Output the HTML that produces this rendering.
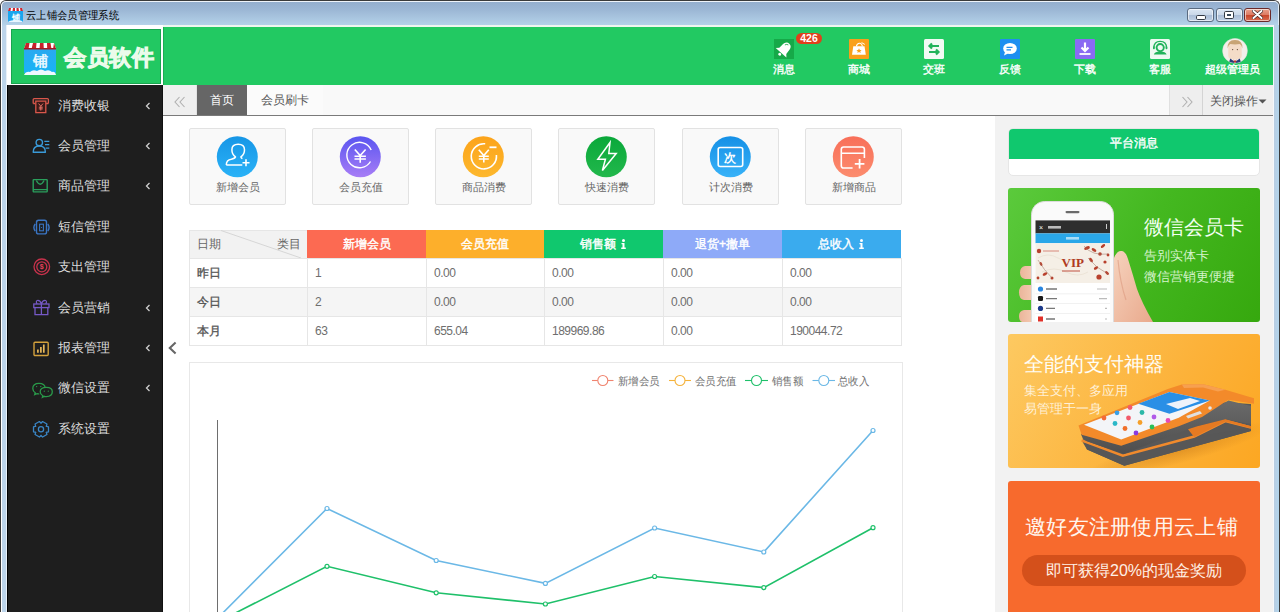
<!DOCTYPE html>
<html><head><meta charset="utf-8">
<style>
*{margin:0;padding:0;box-sizing:border-box}
html,body{width:1280px;height:612px;overflow:hidden;background:#fff;font-family:"Liberation Sans",sans-serif;}
.abs{position:absolute}
#frame{position:absolute;left:0;top:0;width:1280px;height:612px;background:linear-gradient(#93adcc 0px,#9cb7d5 9px,#b4d2e9 24px,#bcd4ea 25px,#bcd4ea 100%);border-left:1px solid #3a3a3a;border-right:1px solid #3a3a3a;border-top:1px solid #3a3a3a;border-radius:6px 6px 0 0}
#title{left:26px;top:8px;font-size:11px;color:#000;line-height:14px;white-space:nowrap;transform:scaleX(0.94);transform-origin:0 0}
.wbtn{position:absolute;top:8px;height:14px;border:1px solid #5a6b80;border-radius:3px;background:linear-gradient(#dbe6f3 0,#c9d7e8 50%,#aabdd6 51%,#bfd0e5 100%);box-shadow:inset 0 0 0 1px rgba(255,255,255,.6)}
#logo{left:7px;top:25px;width:156px;height:60px;background:#fff;}
#logoin{left:11px;top:29px;width:150px;height:55px;background:#22c862;box-shadow:inset 0 0 0 1px rgba(0,60,20,.25)}
#hdr{left:163px;top:25px;width:1110px;height:60px;background:#22c962;border-top:2px solid #eef6f0;box-shadow:inset 1px 0 0 rgba(0,60,20,.2)}
#side{left:7px;top:85px;width:156px;height:527px;background:#1e1e1e;border-left:1px solid #000;border-right:1px solid #111}
#tabs{left:163px;top:85px;width:1110px;height:31px;background:#f9f9f9;border-bottom:1px solid #7a7a7a}
#main{left:163px;top:116px;width:832px;height:496px;background:#fff}
#rpanel{left:995px;top:116px;width:278px;height:496px;background:#f2f2f2}
.mi{left:58px;font-size:13px;line-height:16px;color:#dcdcdc;white-space:nowrap}
.hl{top:62px;width:80px;text-align:center;font-size:11px;line-height:14px;color:#fff;font-weight:normal;-webkit-text-stroke:0.35px #fff;white-space:nowrap}
.card{top:128px;width:97px;height:77px;background:#f9f9f9;border:1px solid #e2e2e2;border-radius:2px}
.clab{top:180px;width:97px;text-align:center;font-size:11px;line-height:14px;color:#666;white-space:nowrap}
.th0{top:237px;font-size:12px;line-height:14px;color:#666}
.th{top:230px;height:28px;line-height:28px;text-align:center;color:#fff;font-size:12px;font-weight:normal;-webkit-text-stroke:0.4px #fff;white-space:nowrap}
.td0{left:197px;height:29px;line-height:29px;padding-top:1px;font-size:12px;font-weight:normal;-webkit-text-stroke:0.35px #555;color:#555}
.td{height:29px;line-height:29px;padding-top:1px;font-size:12px;color:#6e6e6e;letter-spacing:-0.5px}
.leg{top:374.5px;font-size:11px;line-height:13px;color:#707070;transform:scaleX(.95);transform-origin:0 0;white-space:nowrap}
</style></head><body>
<div id="frame"></div>
<div class="abs" style="left:1px;top:1px;width:1278px;height:611px;border-left:1px solid #fff;border-top:1px solid #eef3f9;border-right:1px solid #dfeaf5;border-radius:5px 5px 0 0"></div>
<div class="abs" style="left:1273px;top:25px;width:6px;height:587px;background:linear-gradient(90deg,#f4f8fc 0,#f4f8fc 1px,#b9cde2 1px,#b2d6ee 100%)"></div>
<div class="abs" style="left:6px;top:25px;width:1px;height:587px;background:#e8f0f8"></div>
<svg class="abs" style="left:8px;top:8px" width="15" height="14" viewBox="0 0 15 14"><rect x="0" y="3" width="15" height="11" fill="#1aa6ee"/><path d="M0 3l1-3h13l1 3z" fill="#fff"/><path d="M1 0h2l-.5 3H0zM5 0h2v3H4.5zM8.5 0h2l.5 3H8.5zM12 0h2l1 3h-2.5z" fill="#d0262e"/><text x="7.5" y="11.5" font-size="8" font-weight="bold" fill="#fff" text-anchor="middle" font-family="Liberation Sans">铺</text><path d="M0 14q2-2 4-1.5q3-1.5 6 0q3-1 5 1.5z" fill="#e8f6ff"/></svg>
<div class="abs" id="title">云上铺会员管理系统</div>
<div class="wbtn" style="left:1187px;width:27px"></div>
<div class="wbtn" style="left:1216px;width:27px"></div>
<div class="wbtn" style="left:1244px;width:27px;background:linear-gradient(#eaa08c 0,#dc7b63 50%,#c8452a 51%,#d86d52 100%);border-color:#6b2a2a"></div>
<svg class="abs" style="left:1196px;top:15px" width="10" height="5" viewBox="0 0 10 5"><rect x=".5" y=".5" width="9" height="4" rx="1.2" fill="#fff" stroke="#333a44" stroke-width="1"/></svg>
<svg class="abs" style="left:1224px;top:11px" width="10" height="8" viewBox="0 0 10 8"><rect x=".5" y=".5" width="9" height="7" rx="1.2" fill="#fff" stroke="#333a44" stroke-width="1"/><rect x="3" y="3" width="4" height="2" fill="#3a4a5a"/></svg>
<svg class="abs" style="left:1252px;top:10px" width="11" height="9" viewBox="0 0 11 9"><path d="M1.5 1l8 7M9.5 1l-8 7" stroke="#3a2020" stroke-width="3.2" stroke-linecap="round"/><path d="M1.5 1l8 7M9.5 1l-8 7" stroke="#fff" stroke-width="2" stroke-linecap="round"/></svg>
<div class="abs" id="logo"></div>
<div class="abs" id="logoin"></div>
<div class="abs" id="hdr"></div>

<svg class="abs" style="left:23px;top:42px" width="34" height="33" viewBox="0 0 34 33">
<defs><linearGradient id="lg1" x1="0" y1="0" x2="0" y2="1"><stop offset="0" stop-color="#2aa9f0"/><stop offset="1" stop-color="#17b4f5"/></linearGradient></defs>
<rect x="1" y="7" width="32" height="24" fill="url(#lg1)"/>
<path d="M1 7L3 1h28l2 6z" fill="#fff"/>
<path d="M3 1h3.5l-1 6H1zM10 1h3.5l-.5 6H8.5zM17 1h3.5l.3 6h-4.3zM24 1h3.5l1 6h-4.3zM31 1h0l2 6h-3z" fill="#c8212b"/>
<path d="M1 6h32v1.5H1z" fill="#a51a22"/>
<text x="17" y="24" font-size="15" font-weight="bold" fill="#e8f7ff" text-anchor="middle" font-family="Liberation Sans">铺</text>
<path d="M1 33q2-4 6-3q3-3 7-1q4-3 8 0q4-2 7 1q3-1 4 3z" fill="#eef8ff"/>
</svg>
<div class="abs" style="left:64px;top:45px;font-size:22px;line-height:26px;font-weight:bold;color:#eafbea;letter-spacing:0.5px;-webkit-text-stroke:1px #eafbea;white-space:nowrap">会员软件</div>
<svg class="abs" style="left:773.5px;top:39px" width="20" height="20" viewBox="0 0 20 20"><rect width="20" height="20" fill="#16a948"/><g transform="rotate(42 10 10.5)"><path d="M10 2.6C6.6 2.6 5.6 5.6 5.6 9.2L5.3 12.3 2.8 14.9H17.2L14.7 12.3 14.4 9.2C14.4 5.6 13.4 2.6 10 2.6Z" fill="#fff"/><circle cx="10" cy="16.9" r="1.5" fill="#fff"/><path d="M7.6 6.5q.8-2.2 2.6-2.3" stroke="#16a948" stroke-width=".8" fill="none"/></g></svg>
<div class="abs hl" style="left:743.5px">消息</div>
<svg class="abs" style="left:849px;top:39px" width="20" height="20" viewBox="0 0 20 20"><rect width="20" height="20" rx="1" fill="#f9a01a"/><path d="M4.3 7.2h11.2l1.3 8.6H3z" fill="#fff"/><path d="M7.3 7.5q.8-3.6 3.6-3.3q2 .4 2.6 3.1" fill="none" stroke="#fff" stroke-width="1.1"/><path d="M12.6 3.6l3.2 1.8" stroke="#fff" stroke-width="1"/><path d="M10 9.3l.8 1.6 1.8.2-1.3 1.2.4 1.7-1.7-.9-1.6.9.3-1.7-1.3-1.2 1.8-.2z" fill="#f9a01a"/></svg>
<div class="abs hl" style="left:819px">商城</div>
<svg class="abs" style="left:924px;top:39px" width="20" height="20" viewBox="0 0 20 20"><rect width="20" height="20" rx="1.5" fill="#f2faf4"/><path d="M15 7H5.5M8 4.5L5.5 7 8 9.5" fill="none" stroke="#22b35a" stroke-width="2.2"/><path d="M5 13h9.5M12 10.5l2.5 2.5-2.5 2.5" fill="none" stroke="#22b35a" stroke-width="2.2"/></svg>
<div class="abs hl" style="left:894px">交班</div>
<svg class="abs" style="left:999.5px;top:39px" width="20" height="20" viewBox="0 0 20 20"><rect width="20" height="20" rx="1" fill="#1e8ff0"/><ellipse cx="10" cy="9.5" rx="6.8" ry="5.5" fill="#fff"/><path d="M5 13l-1 3.5 4-2z" fill="#fff"/><path d="M6.5 8.3h6M6.5 10.8h4.5" stroke="#1e8ff0" stroke-width="1.2"/></svg>
<div class="abs hl" style="left:969.5px">反馈</div>
<svg class="abs" style="left:1075px;top:39px" width="20" height="20" viewBox="0 0 20 20"><rect width="20" height="20" rx="1" fill="#8a6af2"/><path d="M10 3.5v8M6.5 8.5L10 12l3.5-3.5" fill="none" stroke="#fff" stroke-width="2.2"/><path d="M4.5 15h11" stroke="#fff" stroke-width="1.8"/></svg>
<div class="abs hl" style="left:1045px">下载</div>
<svg class="abs" style="left:1150px;top:39px" width="20" height="20" viewBox="0 0 20 20"><rect width="20" height="20" rx="1.5" fill="#eef9f1"/><circle cx="10.2" cy="8.6" r="3.6" fill="none" stroke="#22b35a" stroke-width="1.9"/><path d="M3.9 8.6Q3.9 2.3 10.2 2.3T16.5 8.6" fill="none" stroke="#22b35a" stroke-width="1.3"/><rect x="3" y="7.3" width="1.8" height="3" rx=".8" fill="#22b35a"/><rect x="15.6" y="7.3" width="1.8" height="3" rx=".8" fill="#22b35a"/><path d="M3.8 15.6Q4.6 12.6 10.2 12.6T16.6 15.6z" fill="#22b35a"/></svg>
<div class="abs hl" style="left:1120px">客服</div>
<svg class="abs" style="left:1222px;top:38px" width="26" height="26" viewBox="0 0 26 26">
<defs><clipPath id="avc"><circle cx="13" cy="12.8" r="12.2"/></clipPath></defs>
<circle cx="13" cy="12.8" r="12.4" fill="#f3efeb" stroke="#e6e0da" stroke-width=".5"/>
<g clip-path="url(#avc)">
<path d="M6.3 8.5q0-6.4 6.7-6.4t6.7 6.4v9.5q0 3.6-6.7 3.6t-6.7-3.6z" fill="#f4dcc8"/>
<path d="M5.6 10.5q-.6-8.6 7.4-8.6t7.4 8.6q-.8-3.6-2.6-4.4q-4.8.8-9.6 0q-1.8.8-2.6 4.4z" fill="#c8a475"/>
<circle cx="10.6" cy="11.6" r=".7" fill="#6a5040"/><circle cx="15.4" cy="11.6" r=".7" fill="#6a5040"/>
<path d="M6 27l2.5-6.5 4.5 3.5 4.5-3.5L20 27z" fill="#fff"/>
<path d="M8.3 20.5l-2.3 6.5h3.3l3.7-3zM17.7 20.5l2.3 6.5h-3.3l-3.7-3z" fill="#2a3a78"/>
<path d="M11.6 21.5l1.4 1.6 1.4-1.6-.4 3h-2z" fill="#c03030"/>
</g></svg>
<div class="abs hl" style="left:1192px;width:80px">超级管理员</div>
<div class="abs" style="left:796px;top:33px;width:26px;height:11px;border-radius:5.5px;background:#e0401c;color:#fff;font-size:10.5px;font-weight:bold;line-height:11px;text-align:center">426</div>

<div class="abs" id="side"></div>
<svg class="abs" style="left:32px;top:96px" width="22" height="20" viewBox="0 0 22 20"><path d="M1.2 7.5V3.6q0-1 1-1h13.2q1 0 1 1v3.9" fill="none" stroke="#d9574b" stroke-width="1.3"/><path d="M1.2 7.5h2.3M16.4 7.5h-2.3" stroke="#d9574b" stroke-width="1.3"/><path d="M3.8 5.2h10v11.4h-10z" fill="#3a1a18" stroke="#d9574b" stroke-width="1.3"/><path d="M6.6 7.6l2.2 2.6 2.2-2.6M8.8 10.2v4.4M6.8 11.2h4M6.8 12.9h4" stroke="#f07a6e" stroke-width=".9" fill="none"/></svg>
<div class="abs mi" style="top:98px">消费收银</div>
<svg class="abs" style="left:145px;top:102px" width="6" height="8" viewBox="0 0 6 8"><path d="M4.5 1L1.5 4l3 3" fill="none" stroke="#cfcfcf" stroke-width="1.3"/></svg>
<svg class="abs" style="left:32px;top:137px" width="22" height="20" viewBox="0 0 22 20"><circle cx="7.3" cy="5.6" r="3.2" fill="none" stroke="#3a9ad8" stroke-width="1.4"/><path d="M1.2 15.2q0-6.2 6.1-6.2t6.1 6.2z" fill="none" stroke="#3a9ad8" stroke-width="1.4" stroke-linejoin="round"/><path d="M12.3 4.3h5M13 7.7h4.3M13.6 11.1h3.7" stroke="#3a9ad8" stroke-width="1.3"/></svg>
<div class="abs mi" style="top:138px">会员管理</div>
<svg class="abs" style="left:145px;top:142px" width="6" height="8" viewBox="0 0 6 8"><path d="M4.5 1L1.5 4l3 3" fill="none" stroke="#cfcfcf" stroke-width="1.3"/></svg>
<svg class="abs" style="left:32px;top:177px" width="22" height="20" viewBox="0 0 22 20"><rect x="1.2" y="2.6" width="14" height="12.3" rx=".6" fill="none" stroke="#2a9f5c" stroke-width="1.4"/><path d="M4.3 3.5q3.9 7.5 7.8 0M1.2 12.6h14" fill="none" stroke="#2a9f5c" stroke-width="1.4"/></svg>
<div class="abs mi" style="top:178px">商品管理</div>
<svg class="abs" style="left:145px;top:182px" width="6" height="8" viewBox="0 0 6 8"><path d="M4.5 1L1.5 4l3 3" fill="none" stroke="#cfcfcf" stroke-width="1.3"/></svg>
<svg class="abs" style="left:32px;top:218px" width="22" height="20" viewBox="0 0 22 20"><rect x="4.5" y="2.3" width="10" height="13.6" rx="2" fill="none" stroke="#3a75c4" stroke-width="1.4"/><rect x="7.6" y="6.2" width="3.8" height="6.6" fill="none" stroke="#3a75c4" stroke-width="1.1"/><circle cx="9.5" cy="9.5" r=".6" fill="#3a75c4"/><path d="M3.2 6q-2.6 3.5 0 7M15.8 6q2.6 3.5 0 7" fill="none" stroke="#3a75c4" stroke-width="1.4"/></svg>
<div class="abs mi" style="top:219px">短信管理</div>
<svg class="abs" style="left:32px;top:258px" width="22" height="20" viewBox="0 0 22 20"><circle cx="9.8" cy="8.8" r="7.8" fill="none" stroke="#c8324c" stroke-width="1.3"/><circle cx="9.8" cy="8.8" r="5" fill="none" stroke="#c8324c" stroke-width="1.3"/><text x="9.8" y="11.3" font-size="7" font-family="Liberation Sans" font-weight="bold" text-anchor="middle" fill="#e8405a">$</text></svg>
<div class="abs mi" style="top:259px">支出管理</div>
<svg class="abs" style="left:32px;top:298px" width="22" height="20" viewBox="0 0 22 20"><rect x="1.8" y="6" width="15.2" height="3.6" fill="none" stroke="#7659c6" stroke-width="1.3"/><path d="M3 9.6v7h12.8v-7M9.4 6v10.6" fill="none" stroke="#7659c6" stroke-width="1.3"/><path d="M9.4 6q-1.2-4-4.2-3.5q-1.6.6-.2 3.5M9.4 6q1.2-4 4.2-3.5q1.6.6.2 3.5" fill="none" stroke="#7659c6" stroke-width="1.2"/></svg>
<div class="abs mi" style="top:300px">会员营销</div>
<svg class="abs" style="left:145px;top:304px" width="6" height="8" viewBox="0 0 6 8"><path d="M4.5 1L1.5 4l3 3" fill="none" stroke="#cfcfcf" stroke-width="1.3"/></svg>
<svg class="abs" style="left:32px;top:339px" width="22" height="20" viewBox="0 0 22 20"><rect x="2" y="3.3" width="14.2" height="13.2" rx="1" fill="none" stroke="#d3a13c" stroke-width="1.4"/><path d="M5.9 13.8v-3.4M8.9 13.8V7.9M11.8 13.8V5.4" stroke="#e8b85a" stroke-width="1.7"/></svg>
<div class="abs mi" style="top:340px">报表管理</div>
<svg class="abs" style="left:145px;top:344px" width="6" height="8" viewBox="0 0 6 8"><path d="M4.5 1L1.5 4l3 3" fill="none" stroke="#cfcfcf" stroke-width="1.3"/></svg>
<svg class="abs" style="left:32px;top:379px" width="22" height="20" viewBox="0 0 22 20"><path d="M13.2 8.6q-.6-4.2-6.2-4.2q-6.2 0-6.2 5.2q0 2.6 2.4 4.2l-.5 1.8 2.3-1q1.1.3 2.3.3" fill="none" stroke="#2a9a4a" stroke-width="1.3"/><path d="M14.3 17.6q-1 0-2-.3l-1.9 1 .4-1.6q-2.6-1.4-2.6-3.9q0-4.4 6.1-4.4t6 4.4q0 4.8-6 4.8z" fill="none" stroke="#2a9a4a" stroke-width="1.3"/><circle cx="4.6" cy="7.6" r=".7" fill="#2a9a4a"/><circle cx="8.8" cy="7.6" r=".7" fill="#2a9a4a"/><circle cx="12.3" cy="12.2" r=".65" fill="#2a9a4a"/><circle cx="16.3" cy="12.2" r=".65" fill="#2a9a4a"/></svg>
<div class="abs mi" style="top:380px">微信设置</div>
<svg class="abs" style="left:145px;top:384px" width="6" height="8" viewBox="0 0 6 8"><path d="M4.5 1L1.5 4l3 3" fill="none" stroke="#cfcfcf" stroke-width="1.3"/></svg>
<svg class="abs" style="left:32px;top:420px" width="22" height="20" viewBox="0 0 22 20"><path d="M16.50 6.81 L16.50 11.79 L14.20 12.49 L14.36 12.21 L14.90 14.55 L10.60 17.04 L8.84 15.40 L9.16 15.40 L7.40 17.04 L3.10 14.55 L3.64 12.21 L3.80 12.49 L1.50 11.79 L1.50 6.81 L3.80 6.11 L3.64 6.39 L3.10 4.05 L7.40 1.56 L9.16 3.20 L8.84 3.20 L10.60 1.56 L14.90 4.05 L14.36 6.39 L14.20 6.11Z" fill="none" stroke="#3a86c6" stroke-width="1.3" stroke-linejoin="round"/><circle cx="9" cy="9.3" r="2.6" fill="none" stroke="#3a86c6" stroke-width="1.3"/></svg>
<div class="abs mi" style="top:421px">系统设置</div>
<div class="abs" id="tabs"></div>

<div class="abs" style="left:163px;top:85px;width:34px;height:30px;background:#efefef;border-right:1px solid #e2e2e2"></div>
<svg class="abs" style="left:173px;top:96px" width="14" height="12" viewBox="0 0 14 12"><path d="M6.5 1L2 6l4.5 5M11.5 1L7 6l4.5 5" fill="none" stroke="#b0b0b0" stroke-width="1.1"/></svg>
<div class="abs" style="left:197px;top:85px;width:50px;height:30px;background:#666;color:#fff;font-size:12px;line-height:30px;text-align:center">首页</div>
<div class="abs" style="left:247px;top:85px;width:76px;height:30px;color:#555;font-size:12px;line-height:30px;text-align:center;background:#fbfbfb">会员刷卡</div>
<div class="abs" style="left:1169px;top:85px;width:34px;height:30px;background:#eeeeee;border-left:1px solid #e0e0e0;border-right:1px solid #d4d4d4"></div>
<svg class="abs" style="left:1180px;top:96px" width="14" height="12" viewBox="0 0 14 12"><path d="M2.5 1L7 6l-4.5 5M7.5 1L12 6l-4.5 5" fill="none" stroke="#b0b0b0" stroke-width="1.1"/></svg>
<div class="abs" style="left:1203px;top:85px;width:70px;height:30px;background:#efefef;color:#555;font-size:12px;line-height:30px;padding-left:7px;padding-top:1px;white-space:nowrap">关闭操作</div>
<svg class="abs" style="left:1258px;top:99px" width="9" height="5" viewBox="0 0 9 5"><path d="M0.5 0.5h8L4.5 4.5z" fill="#555"/></svg>

<div class="abs" id="main"></div>
<div class="abs card" style="left:189px"></div>
<svg class="abs" style="left:216px;top:136px" width="42" height="42" viewBox="0 0 42 42"><defs><linearGradient id="cg189" x1="0" y1="0" x2="0" y2="1"><stop offset="0" stop-color="#1796e6"/><stop offset="1" stop-color="#2ab2f7"/></linearGradient></defs><circle cx="21.3" cy="20.8" r="20.5" fill="url(#cg189)"/><path d="M10.3 28.9h16M10.3 28.9q0-5 5-5.7q3.5-.6 4.2-2.3q-3.6-2.5-3.6-7.2q0-5.4 6.3-5.4t6.3 5.4q0 4.7-3.6 7.2q.4 1.2 1.5 1.8" fill="none" stroke="#fff" stroke-width="1.5" stroke-linejoin="round"/><path d="M26.5 26.8h7M30 23.3v7" stroke="#fff" stroke-width="1.6"/></svg>
<div class="abs clab" style="left:189px">新增会员</div>
<div class="abs card" style="left:312px"></div>
<svg class="abs" style="left:339px;top:136px" width="42" height="42" viewBox="0 0 42 42"><defs><linearGradient id="cg312" x1="0" y1="0" x2="0" y2="1"><stop offset="0" stop-color="#5a55f0"/><stop offset="1" stop-color="#a77df6"/></linearGradient></defs><circle cx="21.3" cy="20.8" r="20.5" fill="url(#cg312)"/><path d="M31.5 25.5A12.7 12.7 0 1 1 32.2 14" fill="none" stroke="#fff" stroke-width="1.4"/><path d="M15.8 13.5l5.4 6 5.4-6M21.2 19.5v7.2M15.5 20.3h11.4M15.5 23h11.4" fill="none" stroke="#fff" stroke-width="1.6"/></svg>
<div class="abs clab" style="left:312px">会员充值</div>
<div class="abs card" style="left:435px"></div>
<svg class="abs" style="left:462px;top:136px" width="42" height="42" viewBox="0 0 42 42"><defs><linearGradient id="cg435" x1="0" y1="0" x2="0" y2="1"><stop offset="0" stop-color="#fca31a"/><stop offset="1" stop-color="#fdb82e"/></linearGradient></defs><circle cx="21.3" cy="20.8" r="20.5" fill="url(#cg435)"/><path d="M23.2 7.8A12.6 12.6 0 1 0 34.4 19" fill="none" stroke="#fff" stroke-width="1.6"/><path d="M27.5 11.3h7" stroke="#fff" stroke-width="1.8"/><path d="M16.8 13.8l5 5.8 5-5.8M21.8 19.6v6.8M16.8 20.2h10M16.8 23h10" fill="none" stroke="#fff" stroke-width="1.6"/></svg>
<div class="abs clab" style="left:435px">商品消费</div>
<div class="abs card" style="left:558px"></div>
<svg class="abs" style="left:585px;top:136px" width="42" height="42" viewBox="0 0 42 42"><defs><linearGradient id="cg558" x1="0" y1="0" x2="0" y2="1"><stop offset="0" stop-color="#0aa83a"/><stop offset="1" stop-color="#22b84c"/></linearGradient></defs><circle cx="21.3" cy="20.8" r="20.5" fill="url(#cg558)"/><path d="M25 6.5L12.8 23.3h7.6l-3 11.2L31.2 17.4h-7.4z" fill="none" stroke="#fff" stroke-width="1.5" stroke-linejoin="miter"/></svg>
<div class="abs clab" style="left:558px">快速消费</div>
<div class="abs card" style="left:682px"></div>
<svg class="abs" style="left:709px;top:136px" width="42" height="42" viewBox="0 0 42 42"><defs><linearGradient id="cg682" x1="0" y1="0" x2="0" y2="1"><stop offset="0" stop-color="#1590e6"/><stop offset="1" stop-color="#38b2f8"/></linearGradient></defs><circle cx="21.3" cy="20.8" r="20.5" fill="url(#cg682)"/><rect x="9.2" y="11.5" width="24.5" height="19" rx="2" fill="none" stroke="#fff" stroke-width="1.6"/><text x="21.4" y="26" font-size="12" font-weight="bold" fill="#fff" text-anchor="middle" font-family="Liberation Sans">次</text></svg>
<div class="abs clab" style="left:682px">计次消费</div>
<div class="abs card" style="left:805px"></div>
<svg class="abs" style="left:832px;top:136px" width="42" height="42" viewBox="0 0 42 42"><defs><linearGradient id="cg805" x1="0" y1="0" x2="0" y2="1"><stop offset="0" stop-color="#f86f59"/><stop offset="1" stop-color="#fc8c6e"/></linearGradient></defs><circle cx="21.3" cy="20.8" r="20.5" fill="url(#cg805)"/><path d="M32.4 22V13.3q0-2.3-2.3-2.3H11.6q-2.3 0-2.3 2.3v16.4q0 2.3 2.3 2.3h9M9.3 17.3h23.1" fill="none" stroke="#fff" stroke-width="1.6"/><path d="M22.8 27.8h9.6M27.6 23v9.6" stroke="#fff" stroke-width="1.8"/></svg>
<div class="abs clab" style="left:805px">新增商品</div>
<div class="abs" style="left:189px;top:230px;width:118px;height:28px;background:#f2f2f2;border-left:1px solid #e6e6e6;border-top:1px solid #e6e6e6"></div>
<svg class="abs" style="left:189px;top:230px" width="118" height="29"><path d="M32 0.5L112 28" stroke="#d6d6d6" stroke-width="1"/></svg>
<div class="abs th0" style="left:197px">日期</div><div class="abs th0" style="left:277px">类目</div>
<div class="abs th" style="left:307px;width:119px;background:#fc6a52">新增会员</div>
<div class="abs th" style="left:426px;width:118px;background:#fdaf2b">会员充值</div>
<div class="abs th" style="left:544px;width:119px;background:#10c86e">销售额<svg width="9" height="10" viewBox="0 0 9 10" style="vertical-align:-1px;margin-left:3px"><circle cx="4.5" cy="1.5" r="1.5" fill="#fff"/><path d="M2.5 4h3v4.5h1.3V10H2.2V8.5h1.3V5.3h-1z" fill="#fff"/></svg></div>
<div class="abs th" style="left:663px;width:119px;background:#8eaaf8">退货+撤单</div>
<div class="abs th" style="left:782px;width:119px;background:#3aabee">总收入<svg width="9" height="10" viewBox="0 0 9 10" style="vertical-align:-1px;margin-left:3px"><circle cx="4.5" cy="1.5" r="1.5" fill="#fff"/><path d="M2.5 4h3v4.5h1.3V10H2.2V8.5h1.3V5.3h-1z" fill="#fff"/></svg></div>
<div class="abs" style="left:189px;top:258px;width:713px;height:30px;background:#fff;border:1px solid #e6e6e6"></div>
<div class="abs" style="left:307px;top:258px;width:1px;height:30px;background:#e6e6e6"></div>
<div class="abs" style="left:426px;top:258px;width:1px;height:30px;background:#e6e6e6"></div>
<div class="abs" style="left:544px;top:258px;width:1px;height:30px;background:#e6e6e6"></div>
<div class="abs" style="left:663px;top:258px;width:1px;height:30px;background:#e6e6e6"></div>
<div class="abs" style="left:782px;top:258px;width:1px;height:30px;background:#e6e6e6"></div>
<div class="abs td0" style="top:258px">昨日</div>
<div class="abs td" style="left:315px;top:258px">1</div>
<div class="abs td" style="left:434px;top:258px">0.00</div>
<div class="abs td" style="left:552px;top:258px">0.00</div>
<div class="abs td" style="left:671px;top:258px">0.00</div>
<div class="abs td" style="left:790px;top:258px">0.00</div>
<div class="abs" style="left:189px;top:287px;width:713px;height:30px;background:#f5f5f5;border:1px solid #e6e6e6"></div>
<div class="abs" style="left:307px;top:287px;width:1px;height:30px;background:#e6e6e6"></div>
<div class="abs" style="left:426px;top:287px;width:1px;height:30px;background:#e6e6e6"></div>
<div class="abs" style="left:544px;top:287px;width:1px;height:30px;background:#e6e6e6"></div>
<div class="abs" style="left:663px;top:287px;width:1px;height:30px;background:#e6e6e6"></div>
<div class="abs" style="left:782px;top:287px;width:1px;height:30px;background:#e6e6e6"></div>
<div class="abs td0" style="top:287px">今日</div>
<div class="abs td" style="left:315px;top:287px">2</div>
<div class="abs td" style="left:434px;top:287px">0.00</div>
<div class="abs td" style="left:552px;top:287px">0.00</div>
<div class="abs td" style="left:671px;top:287px">0.00</div>
<div class="abs td" style="left:790px;top:287px">0.00</div>
<div class="abs" style="left:189px;top:316px;width:713px;height:30px;background:#fff;border:1px solid #e6e6e6"></div>
<div class="abs" style="left:307px;top:316px;width:1px;height:30px;background:#e6e6e6"></div>
<div class="abs" style="left:426px;top:316px;width:1px;height:30px;background:#e6e6e6"></div>
<div class="abs" style="left:544px;top:316px;width:1px;height:30px;background:#e6e6e6"></div>
<div class="abs" style="left:663px;top:316px;width:1px;height:30px;background:#e6e6e6"></div>
<div class="abs" style="left:782px;top:316px;width:1px;height:30px;background:#e6e6e6"></div>
<div class="abs td0" style="top:316px">本月</div>
<div class="abs td" style="left:315px;top:316px">63</div>
<div class="abs td" style="left:434px;top:316px">655.04</div>
<div class="abs td" style="left:552px;top:316px">189969.86</div>
<div class="abs td" style="left:671px;top:316px">0.00</div>
<div class="abs td" style="left:790px;top:316px">190044.72</div>


<div class="abs" style="left:189px;top:362px;width:714px;height:260px;border:1px solid #e8e8e8;background:#fff"></div>
<div class="abs" style="left:217px;top:420px;width:1px;height:200px;background:#6e6e6e"></div>
<svg class="abs" style="left:0;top:0" width="1280" height="612" viewBox="0 0 1280 612">
<polyline points="217.8,618 327,508.5 436.2,560.5 545.4,583.4 654.6,528 763.8,552 873,430.5" fill="none" stroke="#6bb8e6" stroke-width="1.6"/>
<polyline points="217.8,622 327,566.3 436.2,592.8 545.4,604 654.6,576.5 763.8,587.6 873,527.7" fill="none" stroke="#1fc06a" stroke-width="1.6"/>
<g fill="#fff" stroke="#6bb8e6" stroke-width="1.2">
<circle cx="327" cy="508.5" r="2"/><circle cx="436.2" cy="560.5" r="2"/><circle cx="545.4" cy="583.4" r="2"/><circle cx="654.6" cy="528" r="2"/><circle cx="763.8" cy="552" r="2"/><circle cx="873" cy="430.5" r="2"/></g>
<g fill="#fff" stroke="#1fc06a" stroke-width="1.2">
<circle cx="327" cy="566.3" r="2"/><circle cx="436.2" cy="592.8" r="2"/><circle cx="545.4" cy="604" r="2"/><circle cx="654.6" cy="576.5" r="2"/><circle cx="763.8" cy="587.6" r="2"/><circle cx="873" cy="527.7" r="2"/></g>
<g fill="none" stroke-width="1.1">
<path d="M592 380.5h21.5" stroke="#f0846f"/><circle cx="602.8" cy="380.5" r="5" fill="#fff" stroke="#f0846f"/>
<path d="M669 380.5h22" stroke="#f5b23a"/><circle cx="680" cy="380.5" r="5" fill="#fff" stroke="#f5b23a"/>
<path d="M745 380.5h23" stroke="#1fc06a"/><circle cx="756.5" cy="380.5" r="5" fill="#fff" stroke="#1fc06a"/>
<path d="M812.5 380.5h22.5" stroke="#6bb8e6"/><circle cx="823.8" cy="380.5" r="5" fill="#fff" stroke="#6bb8e6"/>
</g>
</svg>
<div class="abs leg" style="left:618px">新增会员</div>
<div class="abs leg" style="left:695px">会员充值</div>
<div class="abs leg" style="left:772px">销售额</div>
<div class="abs leg" style="left:838px">总收入</div>
<svg class="abs" style="left:167px;top:341px" width="11" height="14" viewBox="0 0 11 14"><path d="M8.6 1.6L2.8 7l5.8 5.4" fill="none" stroke="#666" stroke-width="2.1"/></svg>
<div class="abs" id="rpanel"></div>

<div class="abs" style="left:1008px;top:128px;width:252px;height:48px;border-radius:5px;background:#fff;border:1px solid #e6e6e6;overflow:hidden">
<div style="height:30px;background:#10c86e;color:#fff;font-size:12px;font-weight:normal;-webkit-text-stroke:0.35px #fff;line-height:28px;text-align:center">平台消息</div></div>
<div class="abs" style="left:1008px;top:188px;width:252px;height:134px;border-radius:3px;background:linear-gradient(120deg,#5bca3c 0%,#44b820 50%,#36a80e 100%);overflow:hidden">
<svg width="252" height="134" viewBox="0 0 252 134" style="position:absolute;left:0;top:0">
<defs>
<linearGradient id="skin" x1="0" y1="0" x2="1" y2="1"><stop offset="0" stop-color="#f6d2bd"/><stop offset="1" stop-color="#e9a98c"/></linearGradient>
<linearGradient id="skin2" x1="0" y1="0" x2="1" y2="0"><stop offset="0" stop-color="#eab59a"/><stop offset="1" stop-color="#f6cdb6"/></linearGradient>
</defs>
<path d="M106 70q3-8 8-7q4 1 6 8q5 16 9 30q5 14 16 33H106z" fill="url(#skin)"/>
<path d="M110 72q2 22 8 40" fill="none" stroke="#dc9a7e" stroke-width="1.2" opacity=".6"/>
<path d="M27 78h-10q-5 1-5 6.5t5 6.5h10z" fill="url(#skin2)"/>
<path d="M27 97h-11q-5 1-5 7.5t5 7.5h11z" fill="url(#skin2)"/>
<path d="M27 122h-11q-5 1-5 6t3 6h13z" fill="url(#skin2)"/>
<rect x="23.5" y="13.5" width="82" height="140" rx="13" fill="#fafafa" stroke="#dcdcdc" stroke-width="1"/>
<rect x="57.5" y="23" width="14" height="2.2" rx="1.1" fill="#6a6a6a"/>
<rect x="27.5" y="32.4" width="74.5" height="110" fill="#fff"/>
<rect x="27.5" y="32.4" width="74.5" height="13" fill="#2e2e2e"/>
<text x="31" y="42" font-size="7" fill="#fff" font-family="Liberation Sans">×</text>
<rect x="40" y="38" width="13" height="2.6" fill="#bbb"/>
<rect x="98" y="36" width="1" height="5" fill="#ccc"/>
<rect x="27.5" y="45.4" width="74.5" height="9.8" fill="#2aa7e8"/>
<rect x="58" y="49" width="13" height="2.6" fill="#a8dcf6"/>
<rect x="27.5" y="55.2" width="74.5" height="39.8" fill="#f5efe6"/>
<g fill="none" stroke="#e6dccd" stroke-width=".6"><path d="M30 70q10-6 20 0t20 0M34 84q12-6 24 0t22 0"/></g>
<text x="53.5" y="79" font-size="13" fill="#b03a22" font-family="Liberation Serif" font-weight="bold">VIP</text>
<path d="M54 83h18" stroke="#c05040" stroke-width="1"/>
<path d="M35 63h16" stroke="#d07060" stroke-width=".8"/>
<g fill="#b8402c">
<ellipse cx="79" cy="60" rx="3" ry="1.6" transform="rotate(-20 79 60)"/><ellipse cx="86" cy="62" rx="2.6" ry="1.4" transform="rotate(30 86 62)"/>
<ellipse cx="95" cy="58" rx="2.6" ry="1.4" transform="rotate(-40 95 58)"/><circle cx="92" cy="66" r="1.8"/>
<ellipse cx="83" cy="72" rx="2.5" ry="1.4" transform="rotate(50 83 72)"/><circle cx="97" cy="74" r="1.6"/>
<ellipse cx="88" cy="80" rx="2.4" ry="1.3" transform="rotate(-30 88 80)"/><circle cx="100" cy="67" r="1.4"/>
<circle cx="91" cy="89" r="2.6"/><ellipse cx="99" cy="85" rx="2.3" ry="1.3" transform="rotate(40 99 85)"/>
<circle cx="31" cy="63" r="2.2"/><ellipse cx="33" cy="76" rx="2" ry="1.2" transform="rotate(60 33 76)"/>
<ellipse cx="37" cy="86" rx="2.6" ry="1.3" transform="rotate(-30 37 86)"/><circle cx="44" cy="90" r="1.5"/><circle cx="30" cy="90" r="1.4"/>
</g>
<g fill="none" stroke="#9a7060" stroke-width=".5"><path d="M76 58q8 10 24 8M80 70q8 10 20 16M30 72q6 10 14 18"/></g>
<rect x="27.5" y="95" width="74.5" height="47" fill="#fff"/>
<path d="M27.5 105.8h74.5M27.5 115.5h74.5M27.5 125.5h74.5" stroke="#eeeeee" stroke-width=".8"/>
<circle cx="32.5" cy="101" r="2.6" fill="#2a86e0"/><rect x="30" y="108" width="5" height="5" rx="1.3" fill="#1a1a1a"/>
<circle cx="32.5" cy="120.4" r="2.6" fill="#1c3a8a"/><rect x="30" y="128.5" width="5" height="5" fill="#e03028"/>
<g stroke="#777" stroke-width="1.4"><path d="M38 101h11M38 110.6h11M38 120.4h9M38 131h9"/></g>
<g stroke="#bbb" stroke-width="1.2"><path d="M89 101h10M91 110.6h8M97 120.4h2M97 131h2"/></g>
</svg>
<div class="abs" style="left:136px;top:27px;font-size:20px;line-height:24px;color:#f2fff0;white-space:nowrap">微信会员卡</div>
<div class="abs" style="left:136px;top:61px;font-size:12.5px;line-height:15px;color:#d6f3cc;white-space:nowrap">告别实体卡</div>
<div class="abs" style="left:136px;top:82px;font-size:12.5px;line-height:15px;color:#d6f3cc;white-space:nowrap">微信营销更便捷</div>
</div>
<div class="abs" style="left:1008px;top:334px;width:252px;height:134px;border-radius:3px;background:linear-gradient(120deg,#fdc961 0%,#fcb23a 60%,#fca722 100%);overflow:hidden">
<svg width="252" height="134" viewBox="0 0 252 134" style="position:absolute;left:0;top:0">
<defs><radialGradient id="shd" cx=".5" cy=".5" r=".5"><stop offset="0" stop-color="#b86a10" stop-opacity=".4"/><stop offset="1" stop-color="#b86a10" stop-opacity="0"/></radialGradient>
<linearGradient id="gry" x1="0" y1="0" x2="0" y2="1"><stop offset="0" stop-color="#6a6a6a"/><stop offset="1" stop-color="#4e4e4e"/></linearGradient></defs>
<ellipse cx="170" cy="116" rx="95" ry="14" fill="url(#shd)" transform="rotate(-15 170 116)"/>
<polygon points="73,100 211,68 243,70 243,96.9 116.3,131.8 79,115.5" fill="#585858"/><polygon points="74.4,107.8 114.8,122.5 186.2,103.1 243,93.8 243,96.9 116.3,131.8 79,115.5" fill="#575757"/>
<polyline points="73.6,106.4 114.8,121.7 186.2,102.6 217.3,87 243,93.5" fill="none" stroke="#f08a2c" stroke-width="2.6"/>
<polygon points="73.6,100.8 113.2,111.7 170.7,92.2 211,72 220.4,66.6 243,72 243,90 217.3,85.3 189.3,92.2 180,95.3 116,120 78,107" fill="url(#gry)"/>
<polygon points="180,95.3 189.3,92.2 217.3,85.3 243,92.2 243,94.6 217.3,87.6 186.2,103.1" fill="#e57a22"/>
<polygon points="70.5,91.5 159.8,55 173.8,50.6 195.5,50.3 217.3,55.8 246,64.3 246,69.7 220.4,65.8 211,72 194,83 170.7,92.2 113.2,111.7 73.6,100.8" fill="#f38a2a"/>
<polygon points="173.8,50.6 195.5,50.3 217.3,55.8 210,57.5 195,53.5 176,54" fill="#f7a050"/>
<polygon points="76,90.7 161.4,58.1 201.8,66.6 170.7,83.7 113.2,105.4" fill="#f3f5f8"/>
<polygon points="130.3,69.7 161.4,58.1 201.8,66.6 161.4,79.8" fill="#2a8fe6"/>
<polygon points="158,70 182,64 192,67 170,75" fill="#eef2fa"/>
<g><circle cx="96" cy="84" r="2.4" fill="#f26a3a"/><circle cx="109" cy="78.8" r="2.4" fill="#3aa0e8"/><circle cx="122" cy="73.5" r="2.4" fill="#f25a6a"/>
<circle cx="107" cy="89.5" r="2.4" fill="#2ab8c8"/><circle cx="120.5" cy="84" r="2.4" fill="#f25a6a"/><circle cx="134" cy="78.5" r="2.4" fill="#2ab8a8"/>
<circle cx="117" cy="94.5" r="2.4" fill="#f0702a"/><circle cx="132" cy="88.5" r="2.4" fill="#f5a02a"/><circle cx="146" cy="83" r="2.4" fill="#b05ae8"/>
<circle cx="128" cy="99" r="2.4" fill="#8a3ae0"/><circle cx="144" cy="93" r="2.4" fill="#2ac05a"/><circle cx="160" cy="86.5" r="2.4" fill="#e84ab8"/></g>
<polygon points="178,82 192,77 194,79.5 180,84.5" fill="#e0e0e0"/>
<circle cx="202" cy="74" r="1.8" fill="#e8e8e8"/>
</svg>
<div class="abs" style="left:16px;top:18px;font-size:19.5px;line-height:24px;color:#fffdf5;white-space:nowrap">全能的支付神器</div>
<div class="abs" style="left:16px;top:50px;font-size:12.5px;line-height:15px;color:#fff0d6;white-space:nowrap">集全支付、多应用</div>
<div class="abs" style="left:16px;top:68px;font-size:12.5px;line-height:15px;color:#fff0d6;white-space:nowrap">易管理于一身</div>
</div>
<div class="abs" style="left:1008px;top:481px;width:252px;height:140px;border-radius:3px;background:#f76a2d"></div>
<div class="abs" style="left:1025px;top:514px;font-size:21px;line-height:26px;color:#fff6ee;letter-spacing:0.3px;white-space:nowrap">邀好友注册使用云上铺</div>
<div class="abs" style="left:1022px;top:555px;width:224px;height:31px;border-radius:16px;background:#d4501b;color:#fff0e6;font-size:16px;line-height:31px;text-align:center;white-space:nowrap">即可获得20%的现金奖励</div>

</body></html>
